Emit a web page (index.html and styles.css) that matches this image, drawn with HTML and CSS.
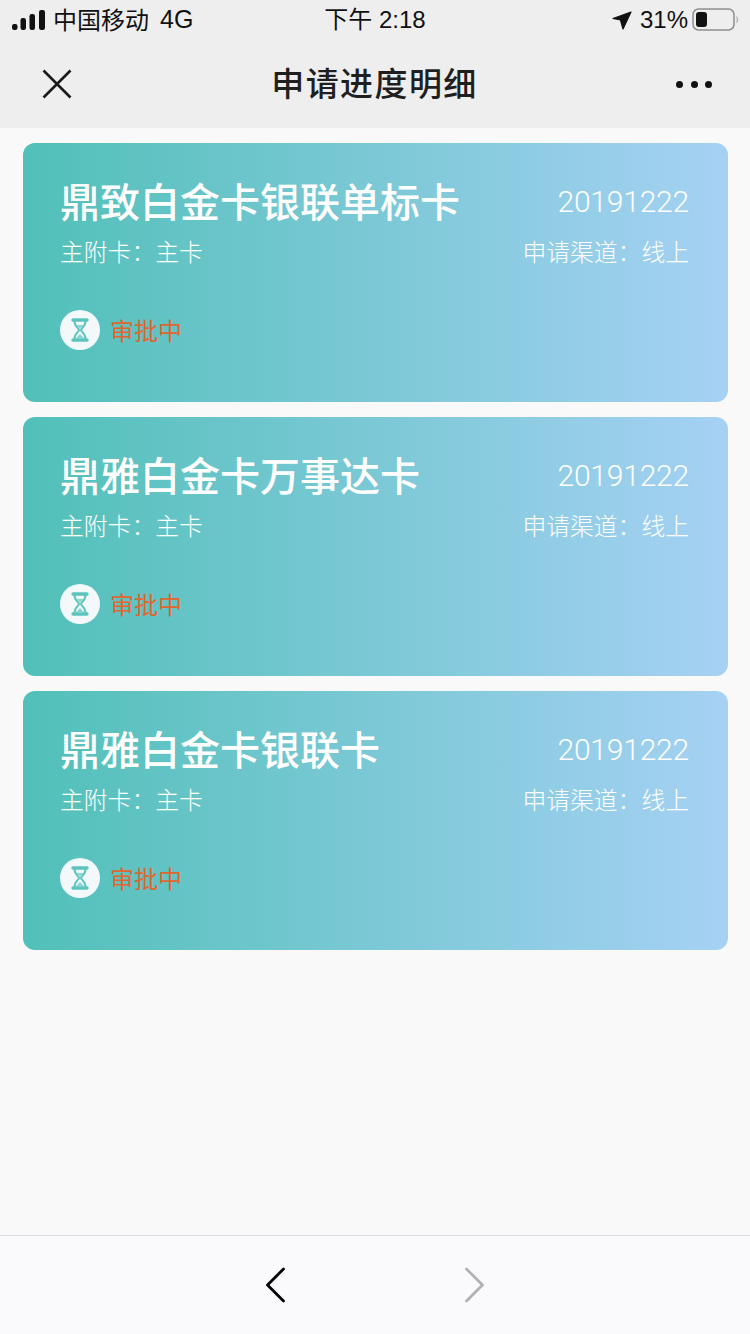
FILE: index.html
```html
<!DOCTYPE html>
<html lang="zh">
<head>
<meta charset="utf-8">
<title>申请进度明细</title>
<link rel="stylesheet" href="styles.css">
</head>
<body>
<div class="page">
  <header class="top">
    <div class="status">
      <div class="status-left">
        <svg class="signal" width="34" height="20" viewBox="0 0 34 20"><rect x="0" y="14" width="5.500" height="6" rx="2.200"/><rect x="8.500" y="8" width="5.500" height="12" rx="2.200"/><rect x="17.500" y="4" width="5.500" height="16" rx="2.200"/><rect x="27" y="0" width="6" height="20" rx="2.200"/></svg>
        <span class="carrier">中国移动</span>
        <span class="net">4G</span>
      </div>
      <div class="clock">下午 2:18</div>
      <div class="status-right">
        <svg class="loc" width="20" height="19" viewBox="0 0 20 19"><path d="M1 7.500 19 1 11 18 8.500 9Z" stroke="#111" stroke-width="1.200" stroke-linejoin="round"/></svg>
        <span class="pct">31%</span>
        <svg class="batt" width="46" height="24" viewBox="0 0 46 24"><rect x="1" y="1" width="41" height="21" rx="5.500" fill="none" stroke="#8e8e8e" stroke-width="1.500"/><rect x="4" y="4" width="11" height="15" rx="3" fill="#111"/><path d="M44.500 8.500c1.200.5 1.200 5.500 0 6" fill="none" stroke="#aaa" stroke-width="1.200"/></svg>
      </div>
    </div>
    <nav class="navbar">
      <svg class="close" width="32" height="32" viewBox="0 0 32 32"><path d="M2.500 2.500 29.500 29.500M29.500 2.500 2.500 29.500" stroke="#1a1a1a" stroke-width="2.600" fill="none"/></svg>
      <h1 class="title">申请进度明细</h1>
      <div class="more"><i></i><i></i><i></i></div>
    </nav>
  </header>

  <main class="list">
    <article class="card">
      <div class="row-main"><h2 class="name">鼎致白金卡银联单标卡</h2><span class="date">20191222</span></div>
      <div class="row-sub"><span>主附卡：主卡</span><span>申请渠道：线上</span></div>
      <div class="state">
        <span class="badge"><svg width="18" height="24" viewBox="0 0 18 24"><path d="M2 2H16M2 22H16" stroke="#5cc3bd" stroke-width="3.400" fill="none" stroke-linecap="round"/><path d="M3.500 3C3.500 9 8 10 8 12C8 14 3.500 15 3.500 21M14.500 3C14.500 9 10 10 10 12C10 14 14.500 15 14.500 21" stroke="#5cc3bd" stroke-width="2" fill="none"/><path d="M5.500 7H12.500L9 10.500ZM9 16 13 20H5Z" fill="#8ad5d0"/></svg></span>
        <span class="state-text">审批中</span>
      </div>
    </article>
    <article class="card">
      <div class="row-main"><h2 class="name">鼎雅白金卡万事达卡</h2><span class="date">20191222</span></div>
      <div class="row-sub"><span>主附卡：主卡</span><span>申请渠道：线上</span></div>
      <div class="state">
        <span class="badge"><svg width="18" height="24" viewBox="0 0 18 24"><path d="M2 2H16M2 22H16" stroke="#5cc3bd" stroke-width="3.400" fill="none" stroke-linecap="round"/><path d="M3.500 3C3.500 9 8 10 8 12C8 14 3.500 15 3.500 21M14.500 3C14.500 9 10 10 10 12C10 14 14.500 15 14.500 21" stroke="#5cc3bd" stroke-width="2" fill="none"/><path d="M5.500 7H12.500L9 10.500ZM9 16 13 20H5Z" fill="#8ad5d0"/></svg></span>
        <span class="state-text">审批中</span>
      </div>
    </article>
    <article class="card">
      <div class="row-main"><h2 class="name">鼎雅白金卡银联卡</h2><span class="date">20191222</span></div>
      <div class="row-sub"><span>主附卡：主卡</span><span>申请渠道：线上</span></div>
      <div class="state">
        <span class="badge"><svg width="18" height="24" viewBox="0 0 18 24"><path d="M2 2H16M2 22H16" stroke="#5cc3bd" stroke-width="3.400" fill="none" stroke-linecap="round"/><path d="M3.500 3C3.500 9 8 10 8 12C8 14 3.500 15 3.500 21M14.500 3C14.500 9 10 10 10 12C10 14 14.500 15 14.500 21" stroke="#5cc3bd" stroke-width="2" fill="none"/><path d="M5.500 7H12.500L9 10.500ZM9 16 13 20H5Z" fill="#8ad5d0"/></svg></span>
        <span class="state-text">审批中</span>
      </div>
    </article>
  </main>

  <footer class="toolbar">
    <svg width="22" height="36" viewBox="0 0 22 36"><path d="M18.500 2 2.500 18 18.500 34" fill="none" stroke="#000" stroke-width="2.800" stroke-linecap="round" stroke-linejoin="round"/></svg>
    <svg width="22" height="36" viewBox="0 0 22 36"><path d="M3.500 2 19.500 18 3.500 34" fill="none" stroke="#b2b2b2" stroke-width="2.800" stroke-linecap="round" stroke-linejoin="round"/></svg>
  </footer>
</div>
</body>
</html>
```

FILE: styles.css
```css
* { box-sizing: border-box; margin: 0; padding: 0; }
html, body { width: 750px; height: 1334px; overflow: hidden; }
body { background: #f9f9f9; font-family: "Noto Sans CJK SC", "Liberation Sans", sans-serif; }
.page { width: 750px; height: 1334px; display: flex; flex-direction: column; }

.top { height: 128px; background: #eeeeee; flex: none; }
.status { height: 40px; display: grid; grid-template-columns: 1fr auto 1fr; align-items: center; padding: 0 12px; color: #111; font-size: 24px; }
.status-left { display: flex; align-items: center; gap: 8px; }
.carrier { font-size: 24px; line-height: 36px; margin-bottom: 2px; margin-left: -1px; }
.net { font-family: "Liberation Sans", sans-serif; font-size: 25px; margin: 0 0 1px 3px; }
.clock { font-family: "Liberation Sans", "Noto Sans CJK SC", sans-serif; font-size: 24px; line-height: 36px; }
.status-right { display: flex; align-items: center; justify-content: flex-end; gap: 8px; font-family: "Liberation Sans", sans-serif; font-size: 24px; }
.signal, .loc { fill: #111; }
.batt { margin-left: -4px; }

.navbar { height: 88px; display: flex; align-items: center; justify-content: space-between; padding: 0 38px 0 41px; }
.title { font-size: 33px; font-weight: 500; color: #1f1f1f; letter-spacing: 1.400px; line-height: 84px; margin-bottom: 4px; }
.more { display: flex; gap: 7.500px; }
.more i { width: 7px; height: 7px; border-radius: 50%; background: #111; }

.list { flex: 1; padding: 15px 22px 0 23px; display: flex; flex-direction: column; gap: 15px; }
.card { height: 259px; flex: none; border-radius: 12px; padding: 32px 39px 0 37px; color: #fff; background: linear-gradient(90deg, #51c0b8 0%, #a6d1f4 100%); }
.row-main { display: flex; justify-content: space-between; align-items: center; height: 56px; }
.name { font-size: 40px; font-weight: 500; line-height: 50px; margin-bottom: 6px; }
.date { font-family: Roboto, "Liberation Sans", sans-serif; font-weight: 300; font-size: 30px; letter-spacing: -0.200px; line-height: 40px; margin-bottom: 2px; }
.row-sub { display: flex; justify-content: space-between; font-size: 23.800px; font-weight: 300; line-height: 34px; margin-top: 3px; }
.state { display: flex; align-items: center; gap: 10px; margin-top: 42px; }
.badge { width: 40px; height: 40px; border-radius: 50%; background: #f3f9fa; display: flex; align-items: center; justify-content: center; }
.state-text { font-size: 24px; color: #e0662f; font-weight: 400; line-height: 34px; margin-bottom: 1px; }

.toolbar { height: 99px; flex: none; background: #fafafc; border-top: 1px solid #dcdcde; display: flex; justify-content: center; align-items: center; gap: 176px; padding: 0 1px 1px 0; }
```
